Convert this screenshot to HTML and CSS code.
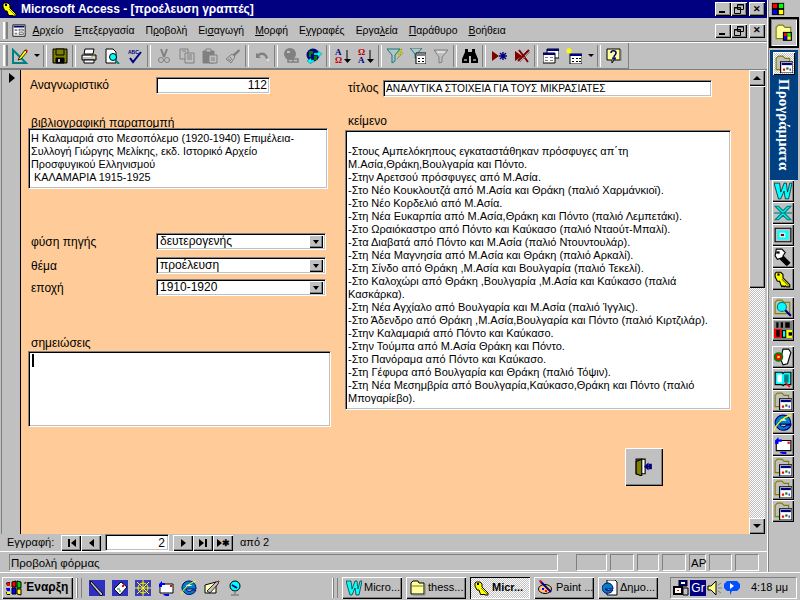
FILE: index.html
```html
<!DOCTYPE html>
<html lang="el">
<head>
<meta charset="utf-8">
<title>Microsoft Access</title>
<link rel="stylesheet" href="styles.css">
</head>
<body>
<svg class="sprite" xmlns="http://www.w3.org/2000/svg">
<symbol id="key" viewBox="0 0 16 16"><path d="M2 2h4l2 2v3l6 6v2h-3l-1-1-1 1-1-1-1 1-1-2-1-3H3L1 6V3z" fill="#ff0" stroke="#000"/><path d="M3 3h2v2H3z" fill="#000"/><path d="M7 8l6 6" stroke="#808000" fill="none"/></symbol>
<symbol id="formicon" viewBox="0 0 16 16"><path d="M1 1h14v13H1z" fill="#fff" stroke="#000"/><path d="M2 2h12v2H2z" fill="#000080"/><path d="M3 6h3v2H3zM3 10h3v2H3z" fill="#808080"/><path d="M8 6h5v2H8zM8 10h5v2H8z" fill="#fff" stroke="#000" stroke-width=".6"/></symbol>
<symbol id="design" viewBox="0 0 16 16"><path d="M1 2v13h13z" fill="none" stroke="#008080" stroke-width="2"/><path d="M4 9v3h3z" fill="#c0c0c0"/><path d="M7 10l6-8 2 2-6 7-3 1z" fill="#ff0" stroke="#000" stroke-width=".8"/><path d="M13 2l2 2 1-1-2-2z" fill="#f00"/></symbol>
<symbol id="save" viewBox="0 0 16 16"><path d="M1 1h14v14H1z" fill="#808000" stroke="#000"/><path d="M4 1h8v6H4z" fill="#808000" stroke="#000"/><path d="M4 10h8v5H4z" fill="#000" stroke="#000"/><path d="M6 11h2v3H6z" fill="#c0c0c0"/></symbol>
<symbol id="print" viewBox="0 0 16 16"><path d="M4 1h9l-1 5H3z" fill="#fff" stroke="#000"/><path d="M1 7h14v5H1z" fill="#c0c0c0" stroke="#000"/><path d="M3 12h10v3H3z" fill="#fff" stroke="#000"/><path d="M2 8h8v1H2z" fill="#fff"/><path d="M12 9h2v1h-2z" fill="#ff0"/></symbol>
<symbol id="preview" viewBox="0 0 16 16"><path d="M2 1h7l3 3v11H2z" fill="#fff" stroke="#000"/><circle cx="9" cy="9" r="3.5" fill="#0ff" stroke="#000"/><path d="M11 12l4 4" stroke="#008080" stroke-width="2"/></symbol>
<symbol id="spell" viewBox="0 0 16 16"><text x="1" y="6" class="tiny">ABC</text><path d="M3 10l3 4 8-10" fill="none" stroke="#000080" stroke-width="2"/></symbol>
<symbol id="cut" viewBox="0 0 16 16"><path d="M5 1l3 8M11 1L8 9" stroke="#808080" stroke-width="2" fill="none"/><circle cx="5" cy="12" r="2.5" fill="none" stroke="#808080"/><circle cx="11" cy="12" r="2.5" fill="none" stroke="#808080"/></symbol>
<symbol id="copy" viewBox="0 0 16 16"><path d="M1 1h8v10H1z" fill="#c0c0c0" stroke="#808080"/><path d="M6 5h9v10H6z" fill="#c0c0c0" stroke="#808080"/><path d="M8 7h5M8 9h5M8 11h5M3 3h4" stroke="#808080"/></symbol>
<symbol id="paste" viewBox="0 0 16 16"><path d="M1 3h11v12H1z" fill="#808080" stroke="#808080"/><path d="M4 1h5v3H4z" fill="#c0c0c0" stroke="#808080"/><path d="M7 7h8v8H7z" fill="#c0c0c0" stroke="#808080"/><path d="M9 10h4M9 12h4" stroke="#808080"/></symbol>
<symbol id="brush" viewBox="0 0 16 16"><path d="M14 1l1 2-6 6-2-2z" fill="#808080"/><path d="M7 6l3 3-4 6-5-4z" fill="#c0c0c0" stroke="#808080"/><path d="M3 11l3 2M5 9l2 3" stroke="#808080"/></symbol>
<symbol id="undo" viewBox="0 0 16 16"><path d="M2 5v5h5L5 8c3-2 6-1 7 3l2-1c-1-5-6-7-10-4z" fill="#808080"/><path d="M13 12h2" stroke="#fff"/></symbol>
<symbol id="link" viewBox="0 0 16 16"><circle cx="7" cy="6" r="6" fill="#808080"/><path d="M4 3h3v2H4z" fill="#c0c0c0"/><path d="M5 11h5v3H5zM10 11h5v3h-5z" fill="none" stroke="#808080" stroke-width="1.5"/></symbol>
<symbol id="web" viewBox="0 0 16 16"><circle cx="7" cy="7" r="6.5" fill="#000080"/><path d="M3 3h4v3H5v3H3zM8 8h3v4H8z" fill="#008000"/><path d="M8 5h4V3l4 3-4 3V7H8zM8 12H5v-2l-4 3 4 3v-2h3z" fill="#0ff" stroke="#008080" stroke-width=".5"/></symbol>
<symbol id="az" viewBox="0 0 16 16"><text x="0" y="7" class="glyph navy">Α</text><text x="0" y="15" class="glyph red">Ω</text><path d="M12 2v11" stroke="#000"/><path d="M9 11h7l-3.5 4z" fill="#000"/></symbol>
<symbol id="za" viewBox="0 0 16 16"><text x="0" y="7" class="glyph red">Ω</text><text x="0" y="15" class="glyph navy">Α</text><path d="M12 2v11" stroke="#000"/><path d="M9 11h7l-3.5 4z" fill="#000"/></symbol>
<symbol id="filter" viewBox="0 0 16 16"><path d="M0 1h13L8 7v6l-3 2V7z" fill="#c0c0c0" stroke="#008080"/><path d="M14 1l-3 5h3l-4 5 6-6h-3l2-4z" fill="#ff0" stroke="#808000" stroke-width=".5"/></symbol>
<symbol id="ffilter" viewBox="0 0 16 16"><path d="M0 0h12L7 6v4H5V6z" fill="#c0c0c0" stroke="#008080"/><path d="M6 5h10v11H6z" fill="#fff" stroke="#000"/><path d="M7 6h8v2H7z" fill="#808080"/><path d="M8 10h2v1H8zM12 10h2v1h-2zM8 13h2v1H8zM12 13h2v1h-2z" fill="#000"/></symbol>
<symbol id="afilter" viewBox="0 0 16 16"><path d="M1 2h14L9 9v5l-3 1V9z" fill="#c0c0c0" stroke="#808080"/><path d="M4 4h8" stroke="#fff"/></symbol>
<symbol id="binoc" viewBox="0 0 16 16"><path d="M3 1h3v3h4V1h3v3l3 7v4H9V8H7v7H0v-4l3-7z" fill="#000"/><path d="M2 11h3v2H2zM11 11h3v2h-3z" fill="#808080"/></symbol>
<symbol id="newrec" viewBox="0 0 16 16"><path d="M1 3l7 5-7 5z" fill="#800000"/><path d="M12 4v8M8 8h8M9 5l6 6M15 5l-6 6" stroke="#000080" stroke-width="1.4"/></symbol>
<symbol id="delrec" viewBox="0 0 16 16"><path d="M1 3l7 5-7 5z" fill="#800000"/><path d="M4 13L15 2M5 2l9 12" stroke="#800000" stroke-width="2"/><path d="M6 14L16 4" stroke="#808080"/></symbol>
<symbol id="dbwin" viewBox="0 0 16 16"><path d="M4 1h12v9H4z" fill="#fff" stroke="#000"/><path d="M4 1h12v2H4z" fill="#000080"/><path d="M0 5h12v10H0z" fill="#fff" stroke="#000"/><path d="M0 5h12v2H0z" fill="#000080"/><path d="M2 9h3v1H2zM7 9h3v1H7zM2 12h3v1H2zM7 12h3v1H7z" fill="#808080"/></symbol>
<symbol id="newobj" viewBox="0 0 16 16"><path d="M3 0v5M0 3h6M1 1l4 4M5 1L1 5" stroke="#ff0" stroke-width="1.2"/><path d="M4 6h12v10H4z" fill="#fff" stroke="#000"/><path d="M4 6h12v2H4z" fill="#000080"/><path d="M6 10h2v1H6zM10 10h2v1h-2zM13 10h2v1h-2zM6 13h2v1H6zM10 13h2v1h-2zM13 13h2v1h-2z" fill="#000"/></symbol>
<symbol id="help" viewBox="0 0 16 16"><path d="M1 1h13v11H8l-2 3v-3H1z" fill="#ff9" stroke="#000"/><path d="M15 2v11" stroke="#808080"/><path d="M5 5c0-3 5-3 5 0 0 2-2 2-2 4M7 10h2v1H7z" fill="none" stroke="#000080" stroke-width="1.6"/></symbol>
<symbol id="exit" viewBox="0 0 16 16"><path d="M1 1h8v13H1z" fill="#fff" stroke="#000"/><path d="M1 3l5-2v15l-5-2z" fill="#808000" stroke="#000"/><path d="M9 7h3V5h3v5h-3V8H9" fill="#000080"/><path d="M8 7.5l4-3.5v7z" fill="#000080"/></symbol>
<symbol id="office" viewBox="0 0 16 16"><path d="M1 1h14v14H1z" fill="#000"/><path d="M2 2h5v5H2z" fill="#f00"/><path d="M9 2h5v5H9z" fill="#0f0"/><path d="M2 9h5v5H2z" fill="#00f"/><path d="M9 9h5v5H9z" fill="#ff0"/></symbol>
<symbol id="folderoffice" viewBox="0 0 16 16"><path d="M1 3l2-2h4l2 2h5v10H1z" fill="#ff9" stroke="#808000"/><path d="M7 7h8v8H7z" fill="#000"/><path d="M8 8h3v3H8z" fill="#f00"/><path d="M11 8h3v3h-3z" fill="#0f0"/><path d="M8 11h3v3H8z" fill="#00f"/><path d="M11 11h3v3h-3z" fill="#ff0"/></symbol>
<symbol id="folderwin" viewBox="0 0 16 16"><path d="M1 3l2-2h4l2 2h4v10H1z" fill="#c0c0c0" stroke="#808000"/><path d="M5 6h11v10H5z" fill="#fff" stroke="#000"/><path d="M6 7h9v2H6z" fill="#000080"/><path d="M7 12h2v2H7z" fill="#f00"/><path d="M10 11h2v2h-2z" fill="#008000"/><path d="M13 12h1v2h-1z" fill="#00f"/></symbol>
<symbol id="word" viewBox="0 0 16 16"><path d="M0 1h5l1 8 3-8h2l1 8 2-8h2l-3 14h-3l-1-7-3 7H4z" fill="#0ff" stroke="#000" stroke-width=".6"/></symbol>
<symbol id="excel" viewBox="0 0 16 16"><path d="M1 2h3l4 4 4-4h3L9 8l6 6h-3L8 10l-4 4H1l6-6z" fill="#0ff" stroke="#008080"/><path d="M0 8h16" stroke="#008080"/></symbol>
<symbol id="ppt" viewBox="0 0 16 16"><path d="M1 2h14v12H1z" fill="#c0c0c0" stroke="#000"/><path d="M3 4h10v8H3z" fill="#0ff"/><path d="M5 6h5v4H5z" fill="#fff"/><path d="M6 7h3v2H6z" fill="#800000"/></symbol>
<symbol id="clip" viewBox="0 0 16 16"><path d="M2 1h5l3 3-2 3 6 6-2 2-6-6-3 1-2-3z" fill="#fff" stroke="#000"/><path d="M8 7l6 6-3 3-6-6z" fill="#000"/><path d="M2 3h3v2H2z" fill="#000"/></symbol>
<symbol id="search" viewBox="0 0 16 16"><path d="M1 3l2-2h4l2 2h5v10H1z" fill="#c0c0c0" stroke="#808000"/><circle cx="7" cy="7" r="4" fill="#0ff" stroke="#008080"/><path d="M10 10l5 5" stroke="#000080" stroke-width="2"/></symbol>
<symbol id="dos" viewBox="0 0 16 16"><path d="M0 0h16v16H0z" fill="#808080"/><path d="M2 1h2v5H2zM6 1h2v5H6zM10 1h4v5h-4z" fill="#000"/><path d="M0 7h7v8H0z" fill="#f00"/><path d="M2 8h3v6H2z" fill="#000"/><path d="M7 8h4v7H7z" fill="#000"/><path d="M8 9h2v5H8z" fill="#0ff"/><path d="M11 8h5v7h-5z" fill="#ff0"/><path d="M13 10h3v3h-3z" fill="#000"/></symbol>
<symbol id="flower" viewBox="0 0 16 16"><path d="M8 1h5l2 3-3 10-4 1-2-5z" fill="#fff" stroke="#000"/><circle cx="4" cy="8" r="3.5" fill="#f00" stroke="#008000" stroke-width="1.5"/><path d="M3 7h2v2H3z" fill="#ff0"/></symbol>
<symbol id="book" viewBox="0 0 16 16"><path d="M1 2h6l1 1 1-1h6v11H9l-1 1-1-1H1z" fill="#0ff" stroke="#000"/><path d="M3 4h4v7H3z" fill="#fff"/><path d="M9 4h4v7H9z" fill="#008080"/><path d="M10 11l4 4" stroke="#f00" stroke-width="1.5"/></symbol>
<symbol id="ie" viewBox="0 0 16 16"><path d="M1 8c0-4 3-7 7-7 5 0 7 4 7 8H5c1 3 5 3 6 1h4c-2 5-9 6-12 2-1-1-2-2-2-4z" fill="#0080c0" stroke="#000080"/><path d="M5 6h6c-1-2-5-2-6 0z" fill="#fff"/><path d="M0 15c1-4 7-12 15-14" fill="none" stroke="#ff0"/></symbol>
<symbol id="mailsync" viewBox="0 0 16 16"><path d="M2 4h13v9H2z" fill="#fff" stroke="#000"/><path d="M12 5h2v2h-2z" fill="#f00"/><path d="M1 7V4l3-3v2h3v2H4v2zM6 14h5v2H8l-3-1z" fill="#00f"/></symbol>
<symbol id="mag" viewBox="0 0 16 16"><path d="M0 0h16v16H0z" fill="#0000c0" opacity=".75"/><path d="M2 1l12 13 -2 2L1 3z" fill="#c0c0c0" stroke="#000"/></symbol>
<symbol id="mail" viewBox="0 0 16 16"><path d="M0 0h16v16H0z" fill="#0000c0" opacity=".75"/><path d="M2 9l7-7 6 5-7 8z" fill="#fff" stroke="#000"/><path d="M10 5h2v2h-2z" fill="#f00"/><path d="M5 9h3M7 11h2" stroke="#008000"/></symbol>
<symbol id="net" viewBox="0 0 16 16"><path d="M0 0h16v16H0z" fill="#0000c0" opacity=".7"/><circle cx="8" cy="8" r="5" fill="none" stroke="#ff0"/><path d="M0 8h16M8 0v16M2 2l12 12M14 2L2 14" stroke="#ff0"/></symbol>
<symbol id="pencil" viewBox="0 0 16 16"><path d="M1 5l11-3v11H1z" fill="#ffffc0" stroke="#000"/><path d="M3 11l9-9 3-1-1 3-8 9z" fill="#c0c0c0" stroke="#000" stroke-width=".8"/><path d="M13 1h2v2z" fill="#f00"/></symbol>
<symbol id="dish" viewBox="0 0 16 16"><ellipse cx="8" cy="6" rx="5" ry="5" fill="#0ff" stroke="#000"/><path d="M5 5l5 3" stroke="#000080" stroke-width="2"/><path d="M8 11v3M4 15h8" stroke="#808080" stroke-width="1.5"/></symbol>
<symbol id="folder" viewBox="0 0 16 16"><path d="M1 3l2-2h5l1 2h5v11H1z" fill="#ffffa0" stroke="#000"/><path d="M1 6h13" stroke="#808000"/><path d="M15 4v11H3" stroke="#808080" fill="none"/></symbol>
<symbol id="paint" viewBox="0 0 16 16"><ellipse cx="7" cy="9" rx="6.5" ry="4.5" fill="#ffc080" stroke="#000"/><path d="M4 8h2v2H4z" fill="#00f"/><path d="M7 10h2v2H7z" fill="#f00"/><path d="M2 1l11 11" stroke="#000080" stroke-width="2"/><path d="M1 0l3 1-1 3z" fill="#f00"/></symbol>
<symbol id="iedoc" viewBox="0 0 16 16"><path d="M5 0h8l2 2v13H5z" fill="#fff" stroke="#000"/><path d="M0 9c0-4 3-6 6-6s5 3 5 6H3c1 2 4 2 5 1h3c-2 4-7 4-9 2-1-1-2-2-2-3z" fill="#0080c0" stroke="#000080"/></symbol>
<symbol id="flag" viewBox="0 0 16 16"><path d="M0 3l2-1h2v4H1zM0 8h4v3H1zM0 12h4v3H1z" fill="#000"/><path d="M1 3h3v3H1z" fill="#f00"/><path d="M1 8h3v3H1z" fill="#00f"/><path d="M1 12h3v2H1z" fill="#ff0"/><path d="M6 2l4-1v6H6z" fill="#f00" stroke="#000"/><path d="M11 1l4 1v6h-4z" fill="#0c0" stroke="#000"/><path d="M6 8h4v6H6z" fill="#00f" stroke="#000"/><path d="M11 9h4v6l-4-1z" fill="#ff0" stroke="#000"/></symbol>
<symbol id="briefmed" viewBox="0 0 16 16"><path d="M6 0h8v6H6z" fill="#000080" stroke="#000"/><path d="M8 2h4v2H8z" fill="#fff"/><path d="M0 6h10v9H0z" fill="#000"/><path d="M2 8h6v5H2z" fill="#fff"/><path d="M4 10h2v1H4z" fill="#f00"/><path d="M10 8h5v7h-5z" fill="#c0c0c0" stroke="#000"/></symbol>
<symbol id="speaker" viewBox="0 0 16 16"><path d="M1 6h3l5-5v14l-5-5H1z" fill="#ffff80" stroke="#000"/><path d="M11 5l3-2M11 8h4M11 11l3 2" stroke="#808080"/></symbol>
<symbol id="bubble" viewBox="0 0 16 16"><path d="M3 1h10l3 3v4l-3 3H8l-2 4v-4H3L0 8V4z" fill="#0050ff"/><path d="M6 3l4 3-4 3z" fill="#fff"/></symbol>
<symbol id="restore" viewBox="0 0 10 10"><path d="M3.5.5h6v5h-6zM.5 3.5h6v6h-6z" fill="#c0c0c0" stroke="#000"/><path d="M3 1h7M0 4h7" stroke="#000"/></symbol>
</svg>

<div class="screen">
  <div class="main">
    <div class="app">
      <header class="titlebar">
        <svg class="ic"><use href="#key"/></svg>
        <span class="title-text">Microsoft Access - [προέλευση γραπτές]</span>
        <div class="winbtns">
          <span class="wbtn raised"><i class="g-min"></i></span><span class="wbtn raised"><svg class="g-res"><use href="#restore"/></svg></span><span class="wbtn wbtn-x raised">✕</span>
        </div>
      </header>
      <nav class="menubar">
        <span class="grip"></span>
        <svg class="ic menu-ic"><use href="#formicon"/></svg>
        <span class="mi"><u>Α</u>ρχείο</span>
        <span class="mi"><u>Ε</u>πεξεργασία</span>
        <span class="mi">Π<u>ρ</u>οβολή</span>
        <span class="mi">Ει<u>σ</u>αγωγή</span>
        <span class="mi"><u>Μ</u>ορφή</span>
        <span class="mi">Ε<u>γ</u>γραφές</span>
        <span class="mi">Εργα<u>λ</u>εία</span>
        <span class="mi"><u>Π</u>αράθυρο</span>
        <span class="mi"><u>Β</u>οήθεια</span>
        <div class="winbtns">
          <span class="wbtn raised"><i class="g-min"></i></span><span class="wbtn raised"><svg class="g-res"><use href="#restore"/></svg></span><span class="wbtn wbtn-x raised">✕</span>
        </div>
      </nav>
      <div class="toolrow">
        <div class="toolbar">
          <span class="grip"></span>
          <span class="tb"><svg class="ic"><use href="#design"/></svg></span><span class="dd"></span><span class="sep"></span>
          <span class="tb"><svg class="ic"><use href="#save"/></svg></span><span class="sep"></span>
          <span class="tb"><svg class="ic"><use href="#print"/></svg></span><span class="tb"><svg class="ic"><use href="#preview"/></svg></span><span class="tb"><svg class="ic"><use href="#spell"/></svg></span><span class="sep"></span>
          <span class="tb"><svg class="ic"><use href="#cut"/></svg></span><span class="tb"><svg class="ic"><use href="#copy"/></svg></span><span class="tb"><svg class="ic"><use href="#paste"/></svg></span><span class="tb"><svg class="ic"><use href="#brush"/></svg></span><span class="sep"></span>
          <span class="tb"><svg class="ic"><use href="#undo"/></svg></span><span class="sep"></span>
          <span class="tb"><svg class="ic"><use href="#link"/></svg></span><span class="tb"><svg class="ic"><use href="#web"/></svg></span><span class="sep"></span>
          <span class="tb"><svg class="ic"><use href="#az"/></svg></span><span class="tb"><svg class="ic"><use href="#za"/></svg></span><span class="sep"></span>
          <span class="tb"><svg class="ic"><use href="#filter"/></svg></span><span class="tb"><svg class="ic"><use href="#ffilter"/></svg></span><span class="tb"><svg class="ic"><use href="#afilter"/></svg></span><span class="sep"></span>
          <span class="tb"><svg class="ic"><use href="#binoc"/></svg></span><span class="sep"></span>
          <span class="tb"><svg class="ic"><use href="#newrec"/></svg></span><span class="tb"><svg class="ic"><use href="#delrec"/></svg></span><span class="sep"></span>
          <span class="tb"><svg class="ic"><use href="#dbwin"/></svg></span><span class="tb"><svg class="ic"><use href="#newobj"/></svg></span><span class="dd"></span><span class="sep"></span>
          <span class="tb"><svg class="ic"><use href="#help"/></svg></span>
        </div>
      </div>
      <div class="workspace">
        <div class="selector"><span class="sel-arrow"></span></div>
        <form class="form">
          <div class="col-left">
            <div class="row row-id">
              <label class="lbl lbl-id">Αναγνωριστικό</label>
              <div class="sunken input-id">112</div>
            </div>
            <div class="lbl lbl-biblio">βιβλιογραφική παραπομπή</div>
            <div class="sunken box-biblio">Η Καλαμαριά στο Μεσοπόλεμο (1920-1940) Επιμέλεια-<br>Συλλογή Γιώργης Μελίκης, εκδ. Ιστορικό Αρχείο<br>Προσφυγικού Ελληνισμού<br>&nbsp;ΚΑΛΑΜΑΡΙΑ 1915-1925</div>
            <div class="row row-combo row-first">
              <label class="lbl lbl-combo">φύση πηγής</label>
              <div class="sunken combo"><span class="combo-text">δευτερογενής</span><span class="combo-btn raised"></span></div>
            </div>
            <div class="row row-combo row-second">
              <label class="lbl lbl-combo">θέμα</label>
              <div class="sunken combo"><span class="combo-text">προέλευση</span><span class="combo-btn raised"></span></div>
            </div>
            <div class="row row-combo">
              <label class="lbl lbl-combo">εποχή</label>
              <div class="sunken combo"><span class="combo-text">1910-1920</span><span class="combo-btn raised"></span></div>
            </div>
            <div class="lbl lbl-notes">σημειώσεις</div>
            <div class="sunken box-notes"><span class="caret"></span></div>
          </div>
          <div class="col-right">
            <div class="row row-title">
              <label class="lbl lbl-title">τίτλος</label>
              <div class="sunken input-title">ΑΝΑΛΥΤΙΚΑ ΣΤΟΙΧΕΙΑ ΓΙΑ ΤΟΥΣ ΜΙΚΡΑΣΙΑΤΕΣ</div>
            </div>
            <div class="lbl lbl-text">κείμενο</div>
            <div class="sunken box-text"><br>-Στους Αμπελόκηπους εγκαταστάθηκαν πρόσφυγες απ΄τη<br>Μ.Ασία,Θράκη,Βουλγαρία και Πόντο.<br>-Στην Αρετσού πρόσφυγες από Μ.Ασία.<br>-Στο Νέο Κουκλουτζά από Μ.Ασία και Θράκη (παλιό Χαρμάνκιοϊ).<br>-Στο Νέο Κορδελιό από Μ.Ασία.<br>-Στη Νέα Ευκαρπία από Μ.Ασία,Θράκη και Πόντο (παλιό Λεμπετάκι).<br>-Στο Ωραιόκαστρο από Πόντο και Καύκασο (παλιό Νταούτ-Μπαλί).<br>-Στα Διαβατά από Πόντο και Μ.Ασία (παλιό Ντουντουλάρ).<br>-Στη Νέα Μαγνησία από Μ.Ασία και Θράκη (παλιό Αρκαλί).<br>-Στη Σίνδο από Θράκη ,Μ.Ασία και Βουλγαρία (παλιό Τεκελί).<br>-Στο Καλοχώρι από Θράκη ,Βουλγαρία ,Μ.Ασία και Καύκασο (παλιά<br>Κασκάρκα).<br>-Στη Νέα Αγχίαλο από Βουλγαρία και Μ.Ασία (παλιό Ίγγλις).<br>-Στο Άδενδρο από Θράκη ,Μ.Ασία,Βουλγαρία και Πόντο (παλιό Κιρτζιλάρ).<br>-Στην Καλαμαριά από Πόντο και Καύκασο.<br>-Στην Τούμπα από Μ.Ασία Θράκη και Πόντο.<br>-Στο Πανόραμα από Πόντο και Καύκασο.<br>-Στη Γέφυρα από Βουλγαρία και Θράκη (παλιό Τόψιν).<br>-Στη Νέα Μεσημβρία από Βουλγαρία,Καύκασο,Θράκη και Πόντο (παλιό<br>Μπογαρίεβο).</div>
            <div class="exit-wrap"><span class="exit-btn"><svg class="ic-exit"><use href="#exit"/></svg></span></div>
          </div>
        </form>
        <div class="scrollbar">
          <span class="sb-btn raised"><i class="tri-up"></i></span>
          <span class="sb-thumb raised"></span>
          <span class="sb-track"></span>
          <span class="sb-btn raised"><i class="tri-down"></i></span>
        </div>
      </div>
      <div class="navbar">
        <span class="nav-label">Εγγραφή:</span>
        <span class="nbtn raised"><i class="n-bar"></i><i class="n-left"></i></span>
        <span class="nbtn raised"><i class="n-left"></i></span>
        <span class="sunken nav-input">2</span>
        <span class="nbtn raised"><i class="n-right"></i></span>
        <span class="nbtn raised"><i class="n-right"></i><i class="n-bar"></i></span>
        <span class="nbtn raised"><i class="n-right"></i><b class="n-star">✱</b></span>
        <span class="nav-of">από 2</span>
      </div>
      <footer class="statusbar">
        <span class="cell cell-main">Προβολή φόρμας</span>
        <span class="cell c1"></span><span class="cell c2"></span><span class="cell c3"></span><span class="cell c4"></span><span class="cell c5">AP</span><span class="cell c6"></span><span class="cell c7"></span>
      </footer>
    </div>
    <aside class="sidebar">
      <div class="side-top"><svg class="ic-logo"><use href="#office"/></svg></div>
      <div class="side-active"><span class="side-pressed"><svg class="ic-side"><use href="#folderoffice"/></svg></span></div>
      <div class="side-panel">
        <span class="side-dither"><svg class="ic-side"><use href="#folderwin"/></svg></span>
        <span class="side-title">Προγράμματα</span>
      </div>
      <div class="side-group">
        <span class="sbtn"><svg class="ic-side"><use href="#word"/></svg></span>
        <span class="sbtn"><svg class="ic-side"><use href="#excel"/></svg></span>
        <span class="sbtn"><svg class="ic-side"><use href="#ppt"/></svg></span>
        <span class="sbtn"><svg class="ic-side"><use href="#clip"/></svg></span>
        <span class="sbtn"><svg class="ic-side"><use href="#key"/></svg></span>
      </div>
      <div class="side-group side-gap1">
        <span class="sbtn"><svg class="ic-side"><use href="#search"/></svg></span>
        <span class="sbtn"><svg class="ic-side"><use href="#dos"/></svg></span>
      </div>
      <div class="side-group side-gap2">
        <span class="sbtn"><svg class="ic-side"><use href="#flower"/></svg></span>
        <span class="sbtn"><svg class="ic-side"><use href="#book"/></svg></span>
        <span class="sbtn"><svg class="ic-side"><use href="#folderwin"/></svg></span>
        <span class="sbtn"><svg class="ic-side"><use href="#ie"/></svg></span>
        <span class="sbtn"><svg class="ic-side"><use href="#mailsync"/></svg></span>
        <span class="sbtn"><svg class="ic-side"><use href="#folderwin"/></svg></span>
        <span class="sbtn"><svg class="ic-side"><use href="#folderwin"/></svg></span>
        <span class="sbtn"><svg class="ic-side"><use href="#folderwin"/></svg></span>
      </div>
    </aside>
  </div>
  <div class="taskbar">
    <span class="start raised"><svg class="ic"><use href="#flag"/></svg><b>Έναρξη</b></span>
    <span class="tgrip tgrip-a"></span>
    <span class="quick">
      <svg class="ic"><use href="#mag"/></svg><svg class="ic"><use href="#mail"/></svg><svg class="ic"><use href="#net"/></svg><svg class="ic"><use href="#mailsync"/></svg><svg class="ic"><use href="#ie"/></svg><svg class="ic"><use href="#pencil"/></svg><svg class="ic"><use href="#dish"/></svg>
    </span>
    <span class="tgrip tgrip-b"></span>
    <span class="task raised"><svg class="ic"><use href="#word"/></svg>Micro...</span>
    <span class="task raised"><svg class="ic"><use href="#folder"/></svg>thess...</span>
    <span class="task task-on"><svg class="ic"><use href="#key"/></svg><b>Micr...</b></span>
    <span class="task raised"><svg class="ic"><use href="#paint"/></svg>Paint ...</span>
    <span class="task raised"><svg class="ic"><use href="#iedoc"/></svg>Δημο...</span>
    <span class="tray">
      <svg class="ic"><use href="#briefmed"/></svg><span class="gr">Gr</span><svg class="ic ic-sp"><use href="#speaker"/></svg><svg class="ic"><use href="#bubble"/></svg><span class="clock">4:18 μμ</span>
    </span>
  </div>
</div>
</body>
</html>
```
FILE: styles.css
```css
* { box-sizing: border-box; }
html, body { margin: 0; padding: 0; }
body { width: 800px; height: 600px; overflow: hidden; background: #c0c0c0; font: 12px/13px "Liberation Sans", Arial, sans-serif; color: #000; }
.sprite { display: none; }
.tiny { font: bold 5px "Liberation Sans", sans-serif; fill: #000080; }
.glyph { font: bold 9px "Liberation Serif", serif; }
.navy { fill: #000080; }
.red { fill: #c00000; }
i, b { font-style: normal; }
u { text-decoration: underline; }
.ic { width: 16px; height: 16px; display: block; flex: none; }

.screen { display: flex; flex-direction: column; width: 800px; height: 600px; }
.main { display: flex; height: 572px; }
.app { width: 768px; display: flex; flex-direction: column; border-right: 1px solid #fff; }

.raised { background: #c0c0c0; box-shadow: inset 1px 1px 0 #fff, inset -1px -1px 0 #000, inset -2px -2px 0 #808080; }
.sunken { background: #fff; border: 1px solid; border-color: #808080 #fff #fff #808080; box-shadow: inset 1px 1px 0 #000, inset -1px -1px 0 #c0c0c0; }

.titlebar { height: 18px; background: #000080; color: #fff; display: flex; align-items: center; padding-left: 2px; flex: none; }
.title-text { font-weight: bold; font-size: 12px; margin-left: 3px; white-space: nowrap; }
.winbtns { margin-left: auto; margin-right: 2px; display: flex; }
.wbtn { width: 16px; height: 14px; position: relative; display: flex; align-items: center; justify-content: center; font-size: 9px; font-weight: bold; color: #000; }
.wbtn-x { margin-left: 2px; }
.g-min { width: 6px; height: 2px; background: #000; margin-top: 6px; margin-right: 2px; }
.g-res { width: 10px; height: 10px; display: block; margin-right: 1px; }

.menubar { height: 22px; margin-top: 2px; display: flex; align-items: center; flex: none; border-bottom: 1px solid #808080; box-shadow: 0 1px 0 #fff; }
.grip { width: 5px; align-self: stretch; margin: 2px 0 2px 3px; border-left: 1px solid #fff; border-right: 1px solid #808080; background: #c0c0c0; box-shadow: inset 1px 0 0 #fff, inset -1px 0 0 #808080; flex: none; }
.menu-ic { margin: 0 1px 0 4px; width: 14px; height: 14px; }
.mi { padding: 0 5.5px; white-space: nowrap; color: #000; font-size: 10.4px; }
.mi:first-of-type { padding-left: 6px; }

.toolrow { height: 26px; margin-top: 1px; flex: none; }
.toolbar { display: flex; align-items: center; height: 26px; width: 629px; border-right: 1px solid #808080; border-bottom: 1px solid #808080; }
.toolbar .grip { margin-right: 0; }
.toolbar .tb:first-of-type { margin-left: 3px; }
.tb { width: 23px; height: 22px; display: flex; align-items: center; justify-content: center; flex: none; }
.dd { width: 11px; height: 22px; flex: none; display: flex; align-items: center; justify-content: center; }
.dd::after { content: ""; border: 3px solid transparent; border-top: 3px solid #000; border-bottom: 0; }
.sep { width: 6px; height: 22px; flex: none; display: flex; justify-content: center; }
.sep::after { content: ""; width: 2px; height: 100%; border-left: 1px solid #808080; border-right: 1px solid #fff; }

.workspace { height: 465px; display: flex; flex: none; border-top: 1px solid #808080; }
.selector { width: 21px; flex: none; border-right: 1px solid #000; background: linear-gradient(90deg, #c0c0c0 1px, #808080 1px, #808080 2px, #c0c0c0 2px); display: flex; justify-content: center; padding-top: 3px; padding-left: 3px; }
.sel-arrow { width: 0; height: 0; border-left: 6px solid #000; border-top: 5px solid transparent; border-bottom: 5px solid transparent; }
.form { width: 728px; background: #ffcc99; display: flex; flex: none; }
.col-left { width: 324px; padding-left: 7px; flex: none; display: flex; flex-direction: column; align-items: flex-start; }
.col-right { display: flex; flex-direction: column; align-items: flex-start; }
.row { display: flex; align-items: center; }
.lbl { white-space: nowrap; }
.row-id { margin-top: 7px; }
.lbl-id { width: 128px; padding-left: 2px; }
.input-id { width: 114px; height: 17px; text-align: right; padding: 1px 2px 0 0; }
.lbl-biblio { margin-top: 23px; padding-left: 3px; height: 12px; line-height: 12px; }
.box-biblio { width: 300px; height: 61px; padding: 3px 2px; white-space: nowrap; margin-top: -1px; overflow: hidden; font-size: 10.8px; }
.row-combo { height: 17px; margin-top: 5px; }
.row-first { margin-top: 44px; }
.row-second { margin-top: 7px; }
.lbl-combo { width: 128px; padding-left: 3px; margin-top: 2px; }
.combo { width: 170px; height: 17px; display: flex; align-items: center; justify-content: space-between; padding: 0 2px 0 3px; }
.combo-btn { width: 14px; height: 13px; position: relative; display: flex; align-items: center; justify-content: center; }
.combo-btn::after { content: ""; border: 3px solid transparent; border-top: 4px solid #000; border-bottom: 0; }
.lbl-notes { margin-top: 41px; padding-left: 3px; height: 14px; }
.box-notes { width: 303px; height: 76px; padding: 2px 3px; }
.caret { display: block; width: 2px; height: 13px; background: #000; }

.row-title { margin-top: 10px; margin-left: 3px; }
.lbl-title { width: 35px; }
.input-title { width: 329px; height: 17px; padding: 1px 2px; white-space: nowrap; font-size: 10.2px; }
.lbl-text { margin-top: 18px; padding-left: 3px; height: 15px; }
.box-text { width: 386px; height: 280px; padding: 1px 2px; white-space: nowrap; overflow: hidden; font-size: 11px; }
.exit-wrap { align-self: flex-end; margin-top: 38px; margin-right: 68px; }
.exit-btn { width: 38px; height: 38px; display: flex; align-items: center; justify-content: center; background: #c0c0c0; box-shadow: inset 1px 1px 0 #fff, inset -1px -1px 0 #000, inset -2px -2px 0 #808080; }
.ic-exit { width: 18px; height: 18px; display: block; }

.scrollbar { width: 18px; flex: none; display: flex; flex-direction: column; padding-right: 2px; }
.sb-btn { height: 16px; display: flex; align-items: center; justify-content: center; flex: none; }
.tri-up { border: 4px solid transparent; border-bottom: 4px solid #000; border-top: 0; }
.tri-down { border: 4px solid transparent; border-top: 4px solid #000; border-bottom: 0; }
.sb-thumb { height: 202px; flex: none; }
.sb-track { flex: 1; background-color: #c0c0c0; background-image: conic-gradient(#fff 25%, #c0c0c0 0 50%, #fff 0 75%, #c0c0c0 0); background-size: 2px 2px; }

.navbar { height: 18px; flex: none; display: flex; align-items: center; padding-left: 7px; border-bottom: 1px solid #fff; font-size: 11px; }
.nav-label { width: 54px; }
.nbtn { width: 20px; height: 16px; display: flex; align-items: center; justify-content: center; margin-top: 1px; }
.nav-input { width: 64px; height: 17px; margin: 0 4px; text-align: right; padding: 2px 3px 0 0; font-size: 12px; }
.n-left { border: 4px solid transparent; border-right: 5px solid #000; border-left: 0; }
.n-right { border: 4px solid transparent; border-left: 5px solid #000; border-right: 0; }
.n-bar { width: 2px; height: 8px; background: #000; margin: 0 1px; }
.n-star { font-size: 9px; line-height: 9px; }
.nav-of { margin-left: 7px; }

.statusbar { height: 19px; flex: none; display: flex; padding: 2px 0 0 9px; }
.cell { height: 17px; border: 1px solid; border-color: #808080 #fff #fff #808080; padding: 2px 1px 0; flex: none; white-space: nowrap; }
.cell-main { width: 549px; margin-right: 18px; font-size: 11.5px; }
.c1 { width: 31px; }
.c2 { width: 24px; margin-left: 3px; }
.c3 { width: 22px; margin-left: 3px; }
.c4 { width: 24px; margin-left: 3px; }
.c5 { width: 17px; margin-left: 3px; padding: 2px 0 0 1px; font-size: 11.5px; }
.c6 { width: 23px; margin-left: 3px; }
.c7 { width: 24px; margin-left: 3px; }

.sidebar { width: 32px; flex: none; display: flex; flex-direction: column; align-items: flex-start; border-left: 1px solid #808080; }
.side-top { height: 17px; width: 100%; padding: 2px 0 0 2px; }
.ic-logo { width: 14px; height: 14px; display: block; }
.side-active { width: 30px; height: 31px; background: #000; padding: 2px; }
.side-pressed { display: flex; width: 26px; height: 27px; align-items: center; justify-content: center; background: #c0c0c0; box-shadow: inset 1px 1px 0 #808080, inset -1px -1px 0 #fff; }
.ic-side { width: 18px; height: 18px; display: block; }
.side-panel { width: 28px; height: 130px; margin: 2px 0 0 1px; background: #004080; display: flex; flex-direction: column; align-items: center; padding-top: 2px; }
.side-dither { width: 22px; height: 23px; display: flex; align-items: center; justify-content: center; background-color: #c0c0c0; background-image: conic-gradient(#fff 25%, #c0c0c0 0 50%, #fff 0 75%, #c0c0c0 0); background-size: 2px 2px; box-shadow: inset 1px 1px 0 #fff, inset -1px -1px 0 #000; }
.side-title { writing-mode: vertical-rl; font: bold 15px/18px "Liberation Serif", serif; color: #fff; margin-top: 4px; white-space: nowrap; }
.side-group { margin-left: 3px; display: flex; flex-direction: column; }
.side-gap1 { margin-top: 7px; }
.side-gap2 { margin-top: 5px; }
.sbtn { width: 22px; height: 22px; display: flex; align-items: center; justify-content: center; background: #c0c0c0; box-shadow: inset 1px 1px 0 #fff, inset -1px -1px 0 #000, inset -2px -2px 0 #808080; }

.taskbar { height: 28px; flex: none; border-top: 1px solid #fff; display: flex; align-items: center; padding: 2px 0 0 2px; font-size: 11px; }
.start { width: 71px; height: 22px; display: flex; align-items: center; padding-left: 4px; gap: 2px; }
.start b { font-size: 12px; }
.tgrip { width: 6px; height: 20px; border-left: 1px solid #fff; border-right: 1px solid #808080; box-shadow: inset 1px 0 0 #808080; flex: none; }
.tgrip-a { margin-left: 3px; }
.tgrip-b { margin-left: 2px; }
.quick { display: flex; gap: 7px; margin-left: 7px; width: 241px; flex: none; }
.task { width: 60px; height: 22px; margin-left: 4px; display: flex; align-items: center; gap: 2px; padding-left: 4px; white-space: nowrap; overflow: hidden; flex: none; }
.task-on { background-color: #c0c0c0; background-image: conic-gradient(#fff 25%, #c0c0c0 0 50%, #fff 0 75%, #c0c0c0 0); background-size: 2px 2px; box-shadow: inset 1px 1px 0 #000, inset -1px -1px 0 #fff; }
.tray { margin-left: 12px; width: 127px; height: 22px; border: 1px solid; border-color: #808080 #fff #fff #808080; display: flex; align-items: center; padding-left: 2px; flex: none; font-size: 12px; }
.gr { width: 16px; height: 16px; background: #000080; color: #fff; text-align: center; line-height: 16px; margin-left: 1px; flex: none; }
.ic-sp { margin: 0 1px; }
.clock { margin-left: 11px; white-space: nowrap; font-size: 11px; }
```
